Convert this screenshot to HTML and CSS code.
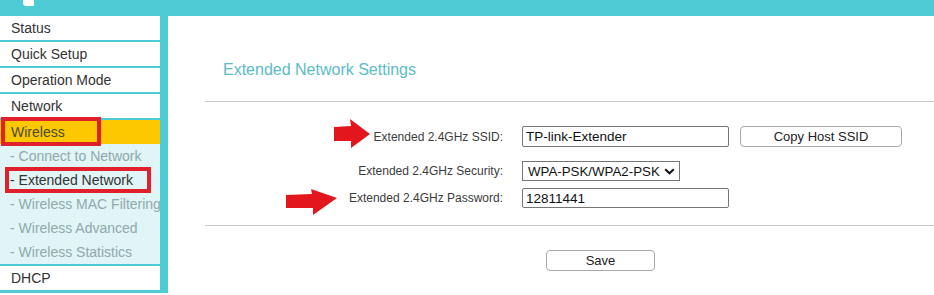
FILE: index.html
```html
<!DOCTYPE html>
<html><head>
	<meta charset="utf-8">
	<title>Extended Network</title>
	<link rel="stylesheet" href="styles.css">
</head><body>
	<div class="topbar"><span class="logo"></span></div>
	<div class="page">
		<ul class="menu">
			<li class="item">Status</li>
			<li class="item">Quick Setup</li>
			<li class="item">Operation Mode</li>
			<li class="item">Network</li>
			<li class="item active"><span class="mark mark-wireless"></span>Wireless</li>
			<li class="sub">
				<div class="sub-item">- Connect to Network</div>
				<div class="sub-item current"><span class="mark mark-ext"></span>- Extended Network</div>
				<div class="sub-item">- Wireless MAC Filtering</div>
				<div class="sub-item">- Wireless Advanced</div>
				<div class="sub-item">- Wireless Statistics</div>
			</li>
			<li class="item">DHCP</li>
		</ul>
		<div class="content">
			<h2 class="title">Extended Network Settings</h2>
			<div class="settings">
				<svg class="arrow arrow-ssid" width="38" height="31" viewBox="0 0 38 31">
					<path d="M1 9 L18 8 L17 1 L37 16 L18 30 L18 23 L1 23 Z" fill="#e3161e"/>
				</svg>
				<svg class="arrow arrow-pass" width="53" height="27" viewBox="0 0 53 27">
					<path d="M1 6 L27 5 L26 0 L52 9 L28 26 L28 19 L1 19 Z" fill="#e3161e"/>
				</svg>
				<div class="row row-ssid">
					<label>Extended 2.4GHz SSID:</label>
					<input class="field" type="text" value="TP-link-Extender">
					<button class="btn btn-copy">Copy Host SSID</button>
				</div>
				<div class="row row-sec">
					<label>Extended 2.4GHz Security:</label>
					<span class="select-wrap">
						<select class="select">
							<option>WPA-PSK/WPA2-PSK</option>
						</select>
						<svg class="chevron" width="11" height="7" viewBox="0 0 11 7">
							<path d="M1.2 1.2 L5.5 5.3 L9.8 1.2" fill="none" stroke="#111" stroke-width="2"/>
						</svg>
					</span>
				</div>
				<div class="row row-pass">
					<label>Extended 2.4GHz Password:</label>
					<input class="field" type="text" value="12811441">
				</div>
			</div>
			<div class="actions">
				<button class="btn btn-save">Save</button>
			</div>
		</div>
	</div>
</body>
</html>
```

FILE: styles.css
```css
* {
	box-sizing: border-box;
}
body {
	margin: 0;
	width: 934px;
	height: 295px;
	overflow: hidden;
	background: #fff;
	font-family: "Liberation Sans", Arial, sans-serif;
	color: #333;
}
.topbar {
	height: 16px;
	background: #4ecbd5;
	position: relative;
}
.logo {
	position: absolute;
	left: 23px;
	top: 0;
	width: 11px;
	height: 6px;
	background: #fff;
	border-radius: 0 0 1px 3px;
}
.page {
	display: flex;
	align-items: flex-start;
}
.menu {
	list-style: none;
	margin: 0;
	padding: 0 8px 1px 0;
	width: 168px;
	background: #4ecbd5;
}
.item {
	position: relative;
	height: 24px;
	line-height: 24px;
	padding-left: 11px;
	margin-bottom: 2px;
	background: #fff;
	font-size: 14px;
	color: #333;
	white-space: nowrap;
}
.item.active {
	margin-bottom: 0;
	background: #fdc800;
	color: #4a4a3a;
}
.sub {
	background: #e1f4f6;
	margin-bottom: 2px;
}
.sub-item {
	position: relative;
	height: 24px;
	line-height: 24px;
	padding-left: 10px;
	font-size: 14px;
	color: #8fa9ad;
	white-space: nowrap;
	overflow: hidden;
}
.sub-item.current {
	color: #333;
	overflow: visible;
}
.mark {
	position: absolute;
	border: 4px solid #e0202a;
}
.mark-wireless {
	left: 1px;
	top: -3px;
	width: 100px;
	height: 29px;
}
.mark-ext {
	left: 5px;
	top: -1px;
	width: 146px;
	height: 26px;
}
.content {
	flex: 1;
}
.title {
	margin: 45px 0 0 55px;
	height: 18px;
	line-height: 18px;
	font-size: 16px;
	font-weight: normal;
	color: #5bbcc7;
}
.settings {
	position: relative;
	margin: 22px 0 0 37px;
	padding-bottom: 17px;
	border-top: 1px solid #cbcbcb;
	border-bottom: 1px solid #cbcbcb;
}
.row {
	display: flex;
	align-items: center;
}
.row label {
	width: 298px;
	margin-right: 19px;
	text-align: right;
	font-size: 12px;
	color: #3c3c3c;
}
.row-ssid {
	margin-top: 24px;
	height: 21px;
}
.row-sec {
	margin-top: 14px;
	height: 20px;
}
.row-pass {
	margin-top: 7px;
	height: 20px;
}
.field {
	width: 207px;
	height: 100%;
	border: 1px solid #767676;
	border-radius: 2px;
	padding: 0 3px;
	font-family: "Liberation Sans", Arial, sans-serif;
	font-size: 13.5px;
	color: #111;
}
.select-wrap {
	position: relative;
	display: block;
	height: 20px;
}
.select {
	appearance: none;
	-webkit-appearance: none;
	width: 158px;
	height: 20px;
	border: 1px solid #767676;
	border-radius: 0;
	background: #fff;
	padding: 0 0 0 5px;
	font-family: "Liberation Sans", Arial, sans-serif;
	font-size: 13.3px;
	color: #111;
}
.chevron {
	position: absolute;
	left: 142px;
	top: 7px;
}
.btn {
	height: 21px;
	background: #fff;
	border: 1px solid #a9a9a9;
	border-radius: 4px;
	font-family: "Liberation Sans", Arial, sans-serif;
	font-size: 13px;
	color: #222;
	padding: 0;
}
.btn-copy {
	width: 162px;
	margin-left: 11px;
}
.actions {
	padding: 24px 0 0 378px;
}
.btn-save {
	width: 109px;
}
.arrow {
	position: absolute;
}
.arrow-ssid {
	left: 128px;
	top: 16px;
}
.arrow-pass {
	left: 80px;
	top: 87px;
}
```
